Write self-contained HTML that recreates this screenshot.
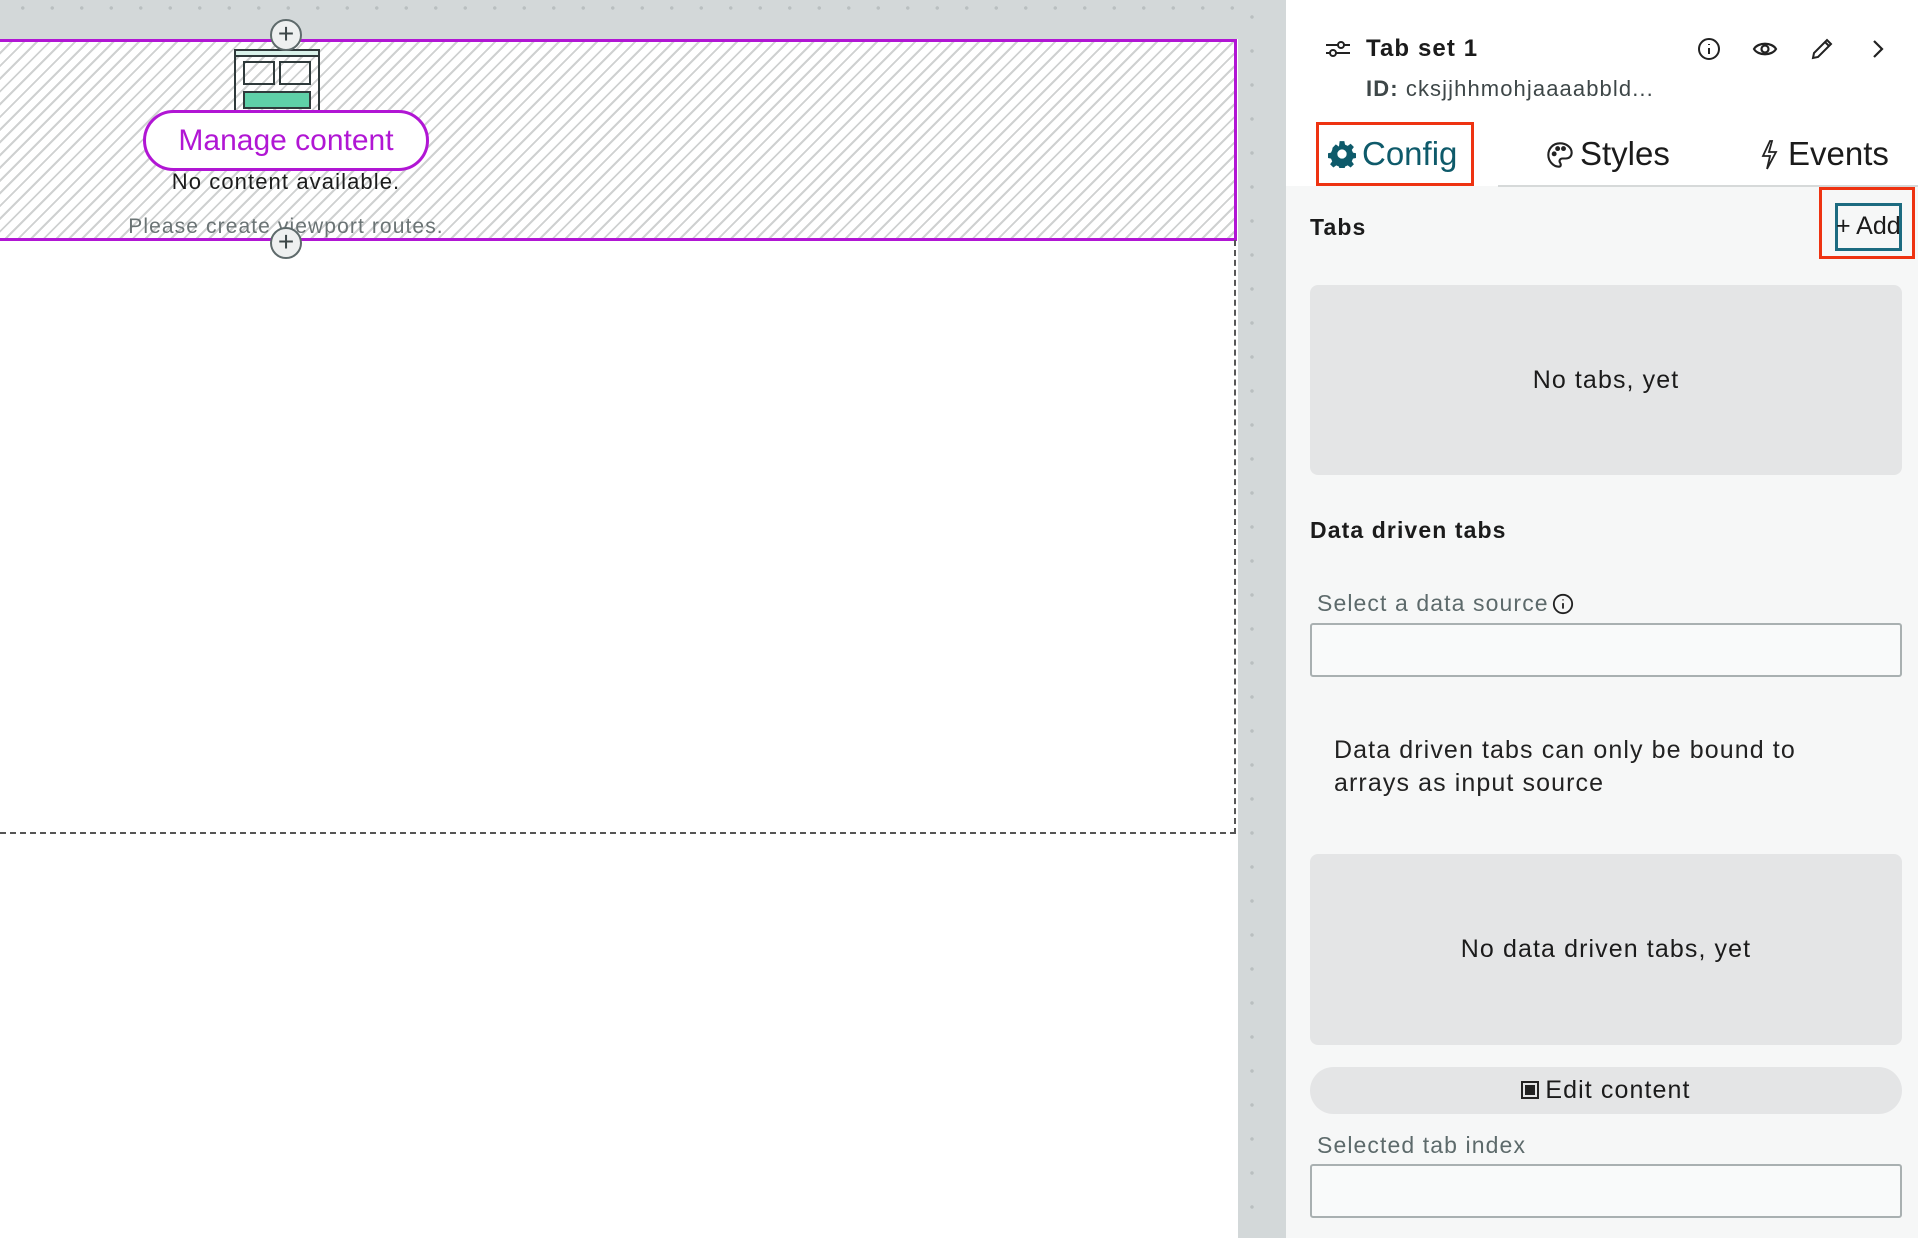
<!DOCTYPE html>
<html><head><meta charset="utf-8"><style>
*{box-sizing:border-box;margin:0;padding:0}
body{width:1918px;height:1238px;position:relative;overflow:hidden;background:#fff;font-family:"Liberation Sans",sans-serif;color:#1b1b1b;letter-spacing:1.1px}
.abs{position:absolute}
.topband{left:0;top:0;width:1238px;height:39px;background:#d3d8d9;background-image:radial-gradient(circle,#b9bfc0 1.5px,transparent 2px);background-size:29.5px 36px;background-position:8px -10px}
.strip{left:1238px;top:0;width:48px;height:1238px;background:#d3d8d9;background-image:radial-gradient(circle,#b9bfc0 1.5px,transparent 2px);background-size:48px 34px;background-position:-10px 0}
.hatch{left:0;top:39px;width:1237px;height:202px;border:3px solid #b116d4;border-left:none;background:repeating-linear-gradient(135deg,#fff 0 7px,#cfd1d1 7px 9px)}
.plus{width:32px;height:32px;border-radius:50%;border:2px solid #5e6a6b;background:#eef0f0;color:#3d4748;font-size:28px;line-height:26px;text-align:center;letter-spacing:0}
.btn{left:143px;top:110px;width:286px;height:61px;border:3px solid #b116d4;border-radius:31px;background:#fff;color:#b116d4;font-size:30px;line-height:55px;text-align:center;letter-spacing:0}
.panel{left:1286px;top:6px;width:632px;height:1232px;background:#f6f7f7}
.head{left:1286px;top:6px;width:632px;height:180px;background:#fff}
.redbox{border:3px solid #ee3311}
.gbox{background:#e4e5e6;border-radius:8px;font-size:25px;text-align:center}
.inp{border:2px solid #a9b0b1;border-radius:3px;background:#f9fafa}
.lbl{color:#5d6a6b;font-size:23px}
.tab{letter-spacing:0}
</style></head><body>
<div class="abs topband"></div>
<div class="abs strip"></div>
<div class="abs hatch"></div>
<div class="abs" style="left:1234px;top:240px;width:0;height:594px;border-left:2px dashed #555"></div>
<div class="abs" style="left:0;top:832px;width:1236px;height:0;border-top:2px dashed #555"></div>
<svg class="abs" style="left:232px;top:48px" width="92" height="66" viewBox="0 0 92 66">
<rect x="3" y="2" width="84" height="62" fill="none" stroke="#2f3a3b" stroke-width="2"/>
<rect x="3" y="2" width="84" height="6" fill="#d9f2ea" stroke="#2f3a3b" stroke-width="2"/>
<rect x="12" y="14" width="30" height="22" fill="none" stroke="#2f3a3b" stroke-width="2"/>
<rect x="48" y="14" width="30" height="22" fill="none" stroke="#2f3a3b" stroke-width="2"/>
<rect x="12" y="44" width="66" height="16" fill="#5fd0a8" stroke="#2f3a3b" stroke-width="2"/>
</svg>
<div class="abs btn">Manage content</div>
<div class="abs" style="left:66px;top:169px;width:440px;text-align:center;font-size:22px">No content available.</div>
<div class="abs" style="left:66px;top:215px;width:440px;text-align:center;font-size:21px;color:#6b7475">Please create viewport routes.</div>
<div class="abs plus" style="left:270px;top:19px">+</div>
<div class="abs plus" style="left:270px;top:227px">+</div>

<div class="abs panel"></div>
<div class="abs head"></div>
<div class="abs" style="left:1498px;top:185px;width:420px;height:2px;background:#d6d9d9"></div>
<svg class="abs" style="left:1324px;top:38px" width="28" height="22" viewBox="0 0 28 22" fill="none" stroke="#222" stroke-width="2"><path d="M2 7h12M20 7h6M2 15h4M12 15h14"/><circle cx="17" cy="7" r="3"/><circle cx="9" cy="15" r="3"/></svg>
<div class="abs" style="left:1366px;top:35px;font-size:24px;font-weight:bold">Tab set 1</div>
<div class="abs" style="left:1366px;top:76px;font-size:22px;color:#3e4748"><b>ID:</b> cksjjhhmohjaaaabbld...</div>
<svg class="abs" style="left:1697px;top:37px" width="24" height="24" viewBox="0 0 24 24" fill="none" stroke="#222" stroke-width="2"><circle cx="12" cy="12" r="10"/><path d="M12 11v6M12 7v1"/></svg>
<svg class="abs" style="left:1752px;top:38px" width="26" height="22" viewBox="0 0 26 22" fill="none" stroke="#222" stroke-width="2.2"><path d="M2 11C6 4 20 4 24 11C20 18 6 18 2 11Z"/><circle cx="13" cy="11" r="3.5"/></svg>
<svg class="abs" style="left:1810px;top:37px" width="24" height="24" viewBox="0 0 24 24" fill="none" stroke="#222" stroke-width="2"><path d="M3 21l1-5L17 3l4 4L8 20z M15 5l4 4"/></svg>
<svg class="abs" style="left:1870px;top:38px" width="16" height="22" viewBox="0 0 16 22" fill="none" stroke="#222" stroke-width="2.2"><path d="M4 3l8 8-8 8"/></svg>

<div class="abs redbox" style="left:1316px;top:122px;width:158px;height:64px"></div>
<svg class="abs" style="left:1328px;top:140px" width="28" height="28" viewBox="0 0 24 24"><path fill="#0e5a6a" d="M10 1h4l.6 3 2.3 1 2.5-1.8 2.8 2.8-1.8 2.5 1 2.3 3 .6v4l-3 .6-1 2.3 1.8 2.5-2.8 2.8-2.5-1.8-2.3 1-.6 3h-4l-.6-3-2.3-1-2.5 1.8-2.8-2.8 1.8-2.5-1-2.3-3-.6v-4l3-.6 1-2.3L3.9 6.6 6.7 3.8 9.2 5.6l.2-.1z M12 8a4 4 0 100 8 4 4 0 000-8z"/></svg>
<div class="abs tab" style="left:1362px;top:135px;font-size:33px;color:#0e5a6a">Config</div>
<svg class="abs" style="left:1546px;top:141px" width="28" height="28" viewBox="0 0 24 24" fill="none" stroke="#222" stroke-width="1.8"><path d="M12 2C6 2 2 6.5 2 12s4.5 10 9 10c2 0 2-2 1-3.5s0-3.5 2-3.5h3c3 0 5-2 5-5 0-4.5-4.5-8-10-8z"/><circle cx="7" cy="11" r="1.2" fill="#222"/><circle cx="10" cy="6.5" r="1.2" fill="#222"/><circle cx="15" cy="6.5" r="1.2" fill="#222"/></svg>
<div class="abs tab" style="left:1580px;top:135px;font-size:33px">Styles</div>
<svg class="abs" style="left:1758px;top:139px" width="22" height="32" viewBox="0 0 22 32" fill="none" stroke="#222" stroke-width="1.8"><path d="M12 2L5 17h7l-3 13 9-17h-7l3-11z"/></svg>
<div class="abs tab" style="left:1788px;top:135px;font-size:33px">Events</div>

<div class="abs" style="left:1310px;top:214px;font-size:23px;font-weight:bold">Tabs</div>
<div class="abs redbox" style="left:1819px;top:187px;width:96px;height:72px"></div>
<div class="abs" style="left:1835px;top:203px;width:67px;height:48px;border:3px solid #1c6b80"></div>
<div class="abs tab" style="left:1836px;top:212px;font-size:25px">+ Add</div>

<div class="abs gbox" style="left:1310px;top:285px;width:592px;height:190px;line-height:190px">No tabs, yet</div>
<div class="abs" style="left:1310px;top:517px;font-size:23px;font-weight:bold">Data driven tabs</div>
<div class="abs lbl" style="left:1317px;top:590px">Select a data source</div>
<svg class="abs" style="left:1552px;top:593px" width="22" height="22" viewBox="0 0 24 24" fill="none" stroke="#222" stroke-width="2"><circle cx="12" cy="12" r="10"/><path d="M12 11v6M12 7v1"/></svg>
<div class="abs inp" style="left:1310px;top:623px;width:592px;height:54px"></div>
<div class="abs" style="left:1334px;top:734px;font-size:25px;line-height:33px;color:#222">Data driven tabs can only be bound to<br>arrays as input source</div>
<div class="abs gbox" style="left:1310px;top:854px;width:592px;height:191px;line-height:191px">No data driven tabs, yet</div>
<div class="abs" style="left:1310px;top:1067px;width:592px;height:47px;border-radius:24px;background:#e4e5e6;text-align:center;font-size:25px;line-height:47px"><span style="display:inline-block;width:18px;height:18px;border:2px solid #222;vertical-align:-1px;margin-right:6px;position:relative"><span style="position:absolute;left:2px;top:2px;width:10px;height:10px;background:#222"></span></span>Edit content</div>
<div class="abs lbl" style="left:1317px;top:1132px">Selected tab index</div>
<div class="abs inp" style="left:1310px;top:1164px;width:592px;height:54px"></div>
</body></html>
